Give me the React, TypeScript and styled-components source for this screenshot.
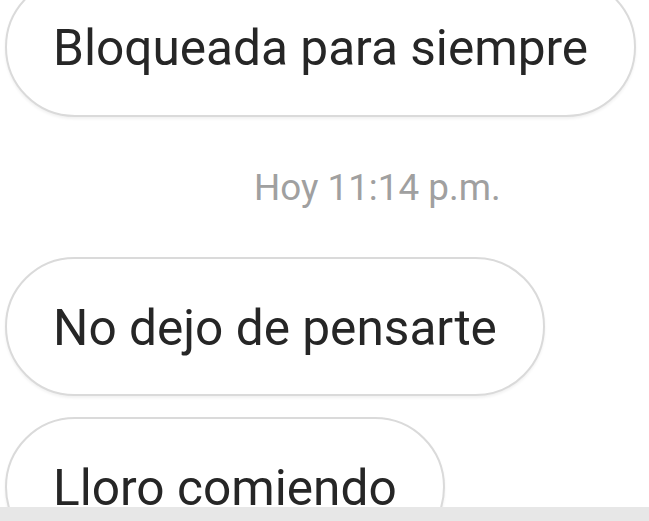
import React from "react";
import styled, { createGlobalStyle } from "styled-components";

const Global = createGlobalStyle`
  html, body { margin: 0; padding: 0; background: #ffffff; }
  body { font-family: Roboto, "Noto Sans", "Liberation Sans", sans-serif; }
`;

const Screen = styled.div`
  width: 649px;
  height: 521px;
  display: grid;
  grid-template-rows: 1fr 14px;
  overflow: hidden;
  background: #fff;
`;

const Thread = styled.div`
  overflow: hidden;
  display: flex;
  flex-direction: column;
  align-items: flex-start;
  padding-left: 5px;
`;

const Bubble = styled.div<{ $top?: number }>`
  box-sizing: border-box;
  margin-top: ${(p) => p.$top ?? 0}px;
  padding: 40px 46px 37px 46px;
  border: 2px solid #dadada;
  border-radius: 70px;
  background: #fff;
  box-shadow: 0 2px 3px rgba(0, 0, 0, 0.06);
  color: #262626;
  font-size: 49.6px;
  line-height: 58.6px;
  white-space: nowrap;
  flex-shrink: 0;
`;

const Stamp = styled.div`
  margin: 50px 0 48px 249px;
  color: #a0a0a0;
  font-size: 36.8px;
  line-height: 42px;
`;

const BottomBar = styled.div`
  background: #e7e7e7;
`;

export default function App() {
  return (
    <>
      <Global />
      <Screen>
        <Thread>
          <Bubble $top={-23}>Bloqueada para siempre</Bubble>
          <Stamp>Hoy 11:14 p.m.</Stamp>
          <Bubble>No dejo de pensarte</Bubble>
          <Bubble $top={21}>Lloro comiendo</Bubble>
        </Thread>
        <BottomBar />
      </Screen>
    </>
  );
}
